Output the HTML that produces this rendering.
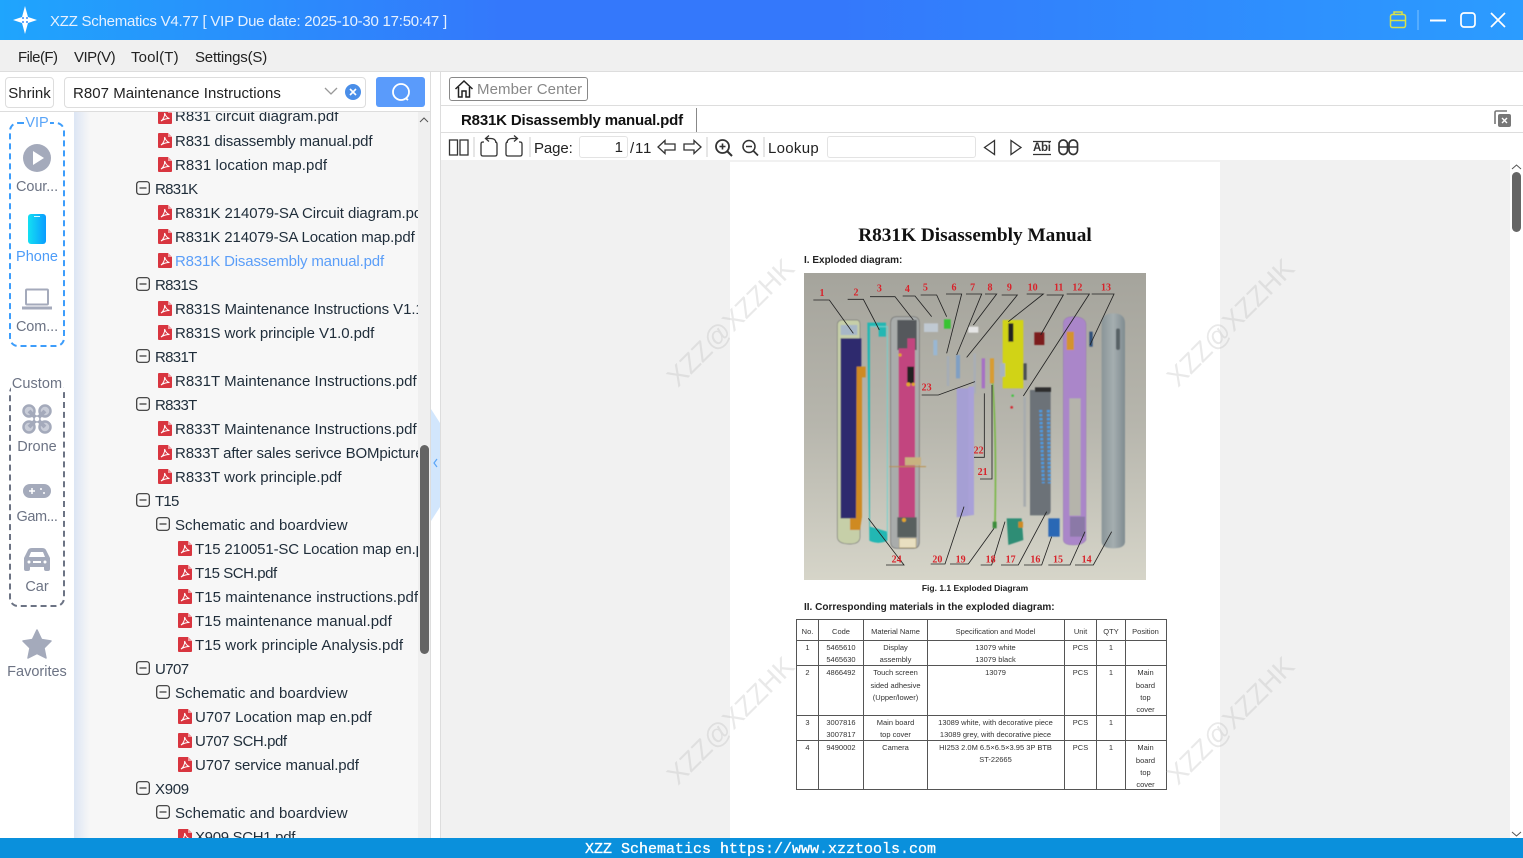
<!DOCTYPE html>
<html><head><meta charset="utf-8"><title>XZZ Schematics</title>
<style>
html,body{margin:0;padding:0;width:1523px;height:858px;overflow:hidden;background:#fff}
body{font-family:"Liberation Sans","Noto Sans CJK SC",sans-serif;position:relative;color:#222}
.a{position:absolute}
.t{position:absolute;white-space:nowrap;line-height:20px;font-size:15px;margin-top:1px}
#tree{position:absolute;left:74px;top:112px;width:344px;height:726px;overflow:hidden;background:linear-gradient(90deg,#dce5f4 0,#f7f7f7 16px,#f7f7f7 100%)}
#tree .r{position:absolute;white-space:nowrap;font-size:15px;line-height:20px;color:#1f2d3a;letter-spacing:-.09px;margin-top:1px}
#tree svg{position:absolute}
.side{position:absolute;left:0;width:74px;text-align:center;font-size:14.5px;line-height:18px;color:#6c7384;margin-top:1px}
</style></head><body>
<svg width="0" height="0" style="position:absolute"><defs>
<symbol id="pdf" viewBox="0 0 14 15"><path d="M0 1Q0 0 1 0H10L14 4V14Q14 15 13 15H1Q0 15 0 14Z" fill="#d8353f"/><path d="M10 0V4H14Z" fill="#f0a0a5"/><path d="M3 12C5 11 7 7 6.6 4C7.6 7 9 9 11.5 9.5C9 9.5 6 10 3 12Z" fill="none" stroke="#fff" stroke-width="1"/></symbol>
<symbol id="minus" viewBox="0 0 14 14"><rect x=".7" y=".7" width="12.6" height="12.6" rx="2.5" fill="none" stroke="#333" stroke-width="1.2"/><path d="M3.5 7H10.5" stroke="#333" stroke-width="1.2"/></symbol>
</defs></svg>

<!-- title bar -->
<div class="a" style="left:0;top:0;width:1523px;height:40px;background:linear-gradient(90deg,#1fa5fd 0,#3478fb 33%,#3478fb 55%,#2b9cff 100%)"></div>
<svg class="a" style="left:12px;top:5px" width="26" height="30" viewBox="0 0 26 30"><path d="M13 1L16 12L25 15L16 18L13 29L10 18L1 15L10 12Z" fill="#fff"/><circle cx="11" cy="13" r="1" fill="#3a8cfb"/><circle cx="15" cy="13" r="1" fill="#3a8cfb"/><circle cx="11" cy="17" r="1" fill="#3a8cfb"/><circle cx="15" cy="17" r="1" fill="#3a8cfb"/></svg>
<div class="t" style="left:50px;top:11px;color:#e6f1ff;font-size:15px;letter-spacing:-.24px">XZZ Schematics V4.77 [ VIP Due date: 2025-10-30 17:50:47 ]</div>
<svg class="a" style="left:1385px;top:8px" width="130" height="24" viewBox="0 0 130 24" fill="none">
<rect x="5.5" y="6.5" width="15" height="13" rx="2" stroke="#d7e24a" stroke-width="1.5"/><path d="M9 6V4H17V6M5.5 12.5H20.5M11 12.5H15" stroke="#d7e24a" stroke-width="1.5"/>
<path d="M33 2V22" stroke="#7cc2ff"/>
<path d="M45 12.5H61" stroke="#fff" stroke-width="2"/>
<rect x="76" y="5" width="14" height="14" rx="3" stroke="#fff" stroke-width="1.7"/>
<path d="M106 5L120 19M120 5L106 19" stroke="#fff" stroke-width="1.7"/>
</svg>

<!-- menu -->
<div class="a" style="left:0;top:40px;width:1523px;height:31px;background:#f0f0f0;border-bottom:1px solid #ddd"></div>
<div class="t" style="left:18px;top:47px;letter-spacing:-.55px">File(F)</div>
<div class="t" style="left:74px;top:47px;letter-spacing:-.5px">VIP(V)</div>
<div class="t" style="left:131px;top:47px;letter-spacing:.15px">Tool(T)</div>
<div class="t" style="left:195px;top:47px;letter-spacing:-.2px">Settings(S)</div>

<!-- left toolbar -->
<div class="a" style="left:0;top:72px;width:430px;height:39px;background:#fff;border-bottom:1px solid #ddd"></div>
<div class="a" style="left:5px;top:77px;width:47px;height:29px;border:1px solid #ddd;border-radius:4px;text-align:center;line-height:31px;font-size:15px">Shrink</div>
<div class="a" style="left:64px;top:77px;width:300px;height:29px;border:1px solid #ddd;border-radius:4px"></div>
<div class="t" style="left:73px;top:83px;font-size:15px;letter-spacing:.04px">R807 Maintenance Instructions</div>
<svg class="a" style="left:322px;top:82px" width="40" height="20" viewBox="0 0 40 20"><path d="M3 6L9 12L15 6" fill="none" stroke="#999" stroke-width="1.3"/><circle cx="31" cy="10" r="8" fill="#4a8ee8"/><path d="M28 7L34 13M34 7L28 13" stroke="#fff" stroke-width="1.6"/></svg>
<div class="a" style="left:376px;top:77px;width:49px;height:30px;background:#5a9bfb;border-radius:3px"></div>
<svg class="a" style="left:390px;top:81px" width="22" height="22" viewBox="0 0 22 22" fill="none"><circle cx="11" cy="11" r="8" stroke="#fff" stroke-width="1.8"/><path d="M15.5 17L18 19" stroke="#fff" stroke-width="1.8"/></svg>

<!-- left icon column -->
<div class="a" style="left:0;top:112px;width:74px;height:726px;background:#fff"></div>
<div class="a" style="left:9px;top:122px;width:52px;height:221px;border:2px dashed #3d9dfb;border-radius:9px"></div>
<div class="side" style="top:113px;left:24px;width:26px;background:#fff;color:#5aa5f8">VIP</div>
<svg class="a" style="left:22px;top:143px" width="30" height="30" viewBox="0 0 30 30"><circle cx="15" cy="15" r="14" fill="#a4aabb"/><path d="M11 8L22 15L11 22Z" fill="#fff"/></svg>
<div class="side" style="top:177px;letter-spacing:-.1px">Cour...</div>
<svg class="a" style="left:28px;top:214px" width="18" height="30" viewBox="0 0 18 30"><defs><linearGradient id="ph" x1="0" x2="1" y1="0" y2="0"><stop offset="0" stop-color="#13e0f2"/><stop offset="1" stop-color="#0a9cff"/></linearGradient></defs><rect width="18" height="30" rx="3" fill="url(#ph)"/><rect x="6" y="2" width="6" height="1" fill="#d8fbff"/></svg>
<div class="side" style="top:247px;color:#4d9cf8">Phone</div>
<svg class="a" style="left:22px;top:288px" width="30" height="22" viewBox="0 0 30 22" fill="none"><rect x="4" y="1.5" width="22" height="15" rx="1" stroke="#a4aabb" stroke-width="2"/><path d="M0 20H30" stroke="#a4aabb" stroke-width="3"/></svg>
<div class="side" style="top:317px;letter-spacing:-.1px">Com...</div>

<div class="a" style="left:9px;top:384px;width:52px;height:219px;border:2px dashed #6c7384;border-radius:9px"></div>
<div class="side" style="top:374px;left:11px;width:52px;background:#fff;letter-spacing:.05px">Custom</div>
<svg class="a" style="left:22px;top:404px" width="30" height="30" viewBox="0 0 30 30" fill="none"><circle cx="7" cy="7" r="5.5" fill="#c9cdd8" stroke="#a4aabb" stroke-width="2.5"/><circle cx="23" cy="7" r="5.5" fill="#c9cdd8" stroke="#a4aabb" stroke-width="2.5"/><circle cx="7" cy="23" r="5.5" fill="#c9cdd8" stroke="#a4aabb" stroke-width="2.5"/><circle cx="23" cy="23" r="5.5" fill="#c9cdd8" stroke="#a4aabb" stroke-width="2.5"/><path d="M7 7L23 23M23 7L7 23" stroke="#a4aabb" stroke-width="4"/><circle cx="15" cy="15" r="3" fill="#fff" stroke="#a4aabb" stroke-width="1.5"/></svg>
<div class="side" style="top:437px">Drone</div>
<svg class="a" style="left:23px;top:484px" width="28" height="14" viewBox="0 0 28 14"><rect width="28" height="14" rx="7" fill="#a4aabb"/><path d="M6 7H12M9 4V10" stroke="#fff" stroke-width="1.5"/><circle cx="18" cy="5" r="1" fill="#fff"/><circle cx="21" cy="9" r="1" fill="#fff"/></svg>
<div class="side" style="top:507px;letter-spacing:-.4px">Gam...</div>
<svg class="a" style="left:23px;top:547px" width="28" height="25" viewBox="0 0 28 25"><path d="M1 11L5 3Q6 1 9 1H19Q22 1 23 3L27 11V22Q27 24 25 24H23Q21 24 21 22V20H7V22Q7 24 5 24H3Q1 24 1 22Z" fill="#a4aabb"/><path d="M6 10L8 5H20L22 10Z" fill="#fff"/><circle cx="6" cy="15" r="1.5" fill="#fff"/><circle cx="22" cy="15" r="1.5" fill="#fff"/><rect x="10" y="14" width="8" height="2" fill="#fff"/></svg>
<div class="side" style="top:577px">Car</div>
<svg class="a" style="left:22px;top:629px" width="30" height="30" viewBox="0 0 30 30"><path d="M15 1L19.5 10.5L29 12L22 19L24 29L15 24.5L6 29L8 19L1 12L10.5 10.5Z" fill="#a4aabb" stroke="#a4aabb" stroke-linejoin="round" stroke-width="1.5"/></svg>
<div class="side" style="top:662px">Favorites</div>

<!-- tree -->
<div id="tree">
<svg style="left:84px;top:-3px" width="14" height="15"><use href="#pdf"/></svg><div class="r" style="left:101px;top:-6px;letter-spacing:.035px">R831 circuit diagram.pdf</div>
<svg style="left:84px;top:21px" width="14" height="15"><use href="#pdf"/></svg><div class="r" style="left:101px;top:19px;letter-spacing:-.13px">R831 disassembly manual.pdf</div>
<svg style="left:84px;top:45px" width="14" height="15"><use href="#pdf"/></svg><div class="r" style="left:101px;top:43px;letter-spacing:.1px">R831 location map.pdf</div>
<svg style="left:62px;top:69px" width="14" height="14"><use href="#minus"/></svg><div class="r" style="left:81px;top:67px;letter-spacing:-.69px">R831K</div>
<svg style="left:84px;top:93px" width="14" height="15"><use href="#pdf"/></svg><div class="r" style="left:101px;top:91px">R831K 214079-SA Circuit diagram.pdf</div>
<svg style="left:84px;top:117px" width="14" height="15"><use href="#pdf"/></svg><div class="r" style="left:101px;top:115px;letter-spacing:-.12px">R831K 214079-SA Location map.pdf</div>
<svg style="left:84px;top:141px" width="14" height="15"><use href="#pdf"/></svg><div class="r" style="left:101px;top:139px;color:#5b9ef8;letter-spacing:-.16px">R831K Disassembly manual.pdf</div>
<svg style="left:62px;top:165px" width="14" height="14"><use href="#minus"/></svg><div class="r" style="left:81px;top:163px;letter-spacing:-.69px">R831S</div>
<svg style="left:84px;top:189px" width="14" height="15"><use href="#pdf"/></svg><div class="r" style="left:101px;top:187px">R831S Maintenance Instructions V1.1.pdf</div>
<svg style="left:84px;top:213px" width="14" height="15"><use href="#pdf"/></svg><div class="r" style="left:101px;top:211px">R831S work principle V1.0.pdf</div>
<svg style="left:62px;top:237px" width="14" height="14"><use href="#minus"/></svg><div class="r" style="left:81px;top:235px;letter-spacing:-.69px">R831T</div>
<svg style="left:84px;top:261px" width="14" height="15"><use href="#pdf"/></svg><div class="r" style="left:101px;top:259px;letter-spacing:.03px">R831T Maintenance Instructions.pdf</div>
<svg style="left:62px;top:285px" width="14" height="14"><use href="#minus"/></svg><div class="r" style="left:81px;top:283px;letter-spacing:-.69px">R833T</div>
<svg style="left:84px;top:309px" width="14" height="15"><use href="#pdf"/></svg><div class="r" style="left:101px;top:307px;letter-spacing:.03px">R833T Maintenance Instructions.pdf</div>
<svg style="left:84px;top:333px" width="14" height="15"><use href="#pdf"/></svg><div class="r" style="left:101px;top:331px;letter-spacing:-.13px">R833T after sales serivce BOMpicture.pdf</div>
<svg style="left:84px;top:357px" width="14" height="15"><use href="#pdf"/></svg><div class="r" style="left:101px;top:355px;letter-spacing:.04px">R833T work principle.pdf</div>
<svg style="left:62px;top:381px" width="14" height="14"><use href="#minus"/></svg><div class="r" style="left:81px;top:379px;letter-spacing:-.75px">T15</div>
<svg style="left:82px;top:405px" width="14" height="14"><use href="#minus"/></svg><div class="r" style="left:101px;top:403px;letter-spacing:.04px">Schematic and boardview</div>
<svg style="left:104px;top:429px" width="14" height="15"><use href="#pdf"/></svg><div class="r" style="left:121px;top:427px;letter-spacing:-.15px">T15 210051-SC Location map en.pdf</div>
<svg style="left:104px;top:453px" width="14" height="15"><use href="#pdf"/></svg><div class="r" style="left:121px;top:451px;letter-spacing:-.45px">T15 SCH.pdf</div>
<svg style="left:104px;top:477px" width="14" height="15"><use href="#pdf"/></svg><div class="r" style="left:121px;top:475px;letter-spacing:.07px">T15 maintenance instructions.pdf</div>
<svg style="left:104px;top:501px" width="14" height="15"><use href="#pdf"/></svg><div class="r" style="left:121px;top:499px;letter-spacing:.1px">T15 maintenance manual.pdf</div>
<svg style="left:104px;top:525px" width="14" height="15"><use href="#pdf"/></svg><div class="r" style="left:121px;top:523px;letter-spacing:.07px">T15 work principle Analysis.pdf</div>
<svg style="left:62px;top:549px" width="14" height="14"><use href="#minus"/></svg><div class="r" style="left:81px;top:547px;letter-spacing:-.6px">U707</div>
<svg style="left:82px;top:573px" width="14" height="14"><use href="#minus"/></svg><div class="r" style="left:101px;top:571px;letter-spacing:.04px">Schematic and boardview</div>
<svg style="left:104px;top:597px" width="14" height="15"><use href="#pdf"/></svg><div class="r" style="left:121px;top:595px;letter-spacing:.03px">U707 Location map en.pdf</div>
<svg style="left:104px;top:621px" width="14" height="15"><use href="#pdf"/></svg><div class="r" style="left:121px;top:619px;letter-spacing:-.42px">U707 SCH.pdf</div>
<svg style="left:104px;top:645px" width="14" height="15"><use href="#pdf"/></svg><div class="r" style="left:121px;top:643px">U707 service manual.pdf</div>
<svg style="left:62px;top:669px" width="14" height="14"><use href="#minus"/></svg><div class="r" style="left:81px;top:667px;letter-spacing:-.3px">X909</div>
<svg style="left:82px;top:693px" width="14" height="14"><use href="#minus"/></svg><div class="r" style="left:101px;top:691px;letter-spacing:.04px">Schematic and boardview</div>
<svg style="left:104px;top:717px" width="14" height="15"><use href="#pdf"/></svg><div class="r" style="left:121px;top:715px;letter-spacing:-.32px">X909 SCH1.pdf</div>
</div>
<div class="a" style="left:418px;top:112px;width:12px;height:726px;background:#efefef"></div>
<svg class="a" style="left:418px;top:115px" width="12" height="10"><path d="M2 7L6 3L10 7" fill="none" stroke="#555"/></svg>
<div class="a" style="left:420px;top:445px;width:9px;height:209px;background:#646464;border-radius:5px"></div>
<div class="a" style="left:430px;top:72px;width:1px;height:766px;background:#ddd"></div>
<div class="a" style="left:440px;top:72px;width:1px;height:766px;background:#ddd"></div>
<svg class="a" style="left:431px;top:409px" width="9" height="112" viewBox="0 0 9 112"><path d="M0 0L9 14V98L0 112Z" fill="#d2e6fc"/><path d="M6 50L3 54L6 58" fill="none" stroke="#5aa5f8" stroke-width="1.2"/></svg>

<!-- right header -->
<div class="a" style="left:441px;top:105px;width:1082px;height:1px;background:#ddd"></div>
<div class="a" style="left:441px;top:132px;width:1082px;height:1px;background:#ddd"></div>
<div class="a" style="left:449px;top:77px;width:137px;height:22px;border:1px solid #888;border-radius:3px"></div>
<svg class="a" style="left:454px;top:79px" width="20" height="20" viewBox="0 0 20 20" fill="none" stroke="#222" stroke-width="1.5"><path d="M1.5 10L10 2L18.5 10"/><path d="M4.5 8V18H8V12H12V18H15.5V8"/></svg>
<div class="t" style="left:477px;top:79px;font-size:15px;color:#888;letter-spacing:.08px">Member Center</div>
<div class="t" style="left:461px;top:110px;font-size:15px;font-weight:bold;color:#111;letter-spacing:-.17px">R831K Disassembly manual.pdf</div>
<div class="a" style="left:696px;top:108px;width:1px;height:24px;background:#888"></div>
<svg class="a" style="left:1493px;top:109px" width="20" height="20" viewBox="0 0 20 20"><path d="M2 15V3.5Q2 2 3.5 2H14" fill="none" stroke="#777" stroke-width="1.6"/><rect x="5" y="5" width="13" height="13" rx="2" fill="#777"/><path d="M9 9L14 14M14 9L9 14" stroke="#fff" stroke-width="1.4"/></svg>

<!-- pdf toolbar -->
<svg class="a" style="left:441px;top:133px" width="660" height="27" viewBox="0 0 660 27" fill="none" stroke="#333" stroke-width="1.3">
<rect x="8.5" y="7" width="8" height="15"/><rect x="19" y="7" width="8" height="15"/>
<path d="M33 4V24M89 4V24M266 4V24M323 4V24" stroke="#ccc" stroke-width="1"/>
<path d="M43 9H42Q40 9 40 11V21Q40 23 42 23H54Q56 23 56 21V11Q56 9 54 9"/><path d="M48 2.5L44.5 5.5L48 8.5M45 5.5H50Q54 5.5 55 9"/>
<path d="M78 9H79Q81 9 81 11V21Q81 23 79 23H67Q65 23 65 21V11Q65 9 67 9"/><path d="M73 2.5L76.5 5.5L73 8.5M76 5.5H71Q67 5.5 66 9"/>
<path d="M217 14L224 7.5V11H234V17H224V20.5Z"/>
<path d="M260 14L253 7.5V11H243V17H253V20.5Z"/>
<circle cx="281.5" cy="13.5" r="6.5" stroke-width="1.8"/><path d="M286.5 18.5L291 23" stroke-width="2"/><path d="M278.5 13.5H284.5M281.5 10.5V16.5" stroke-width="1.6"/>
<circle cx="308" cy="13.5" r="6" stroke-width="1.5"/><path d="M312.5 18L317 22.5" stroke-width="1.8"/><path d="M305 13.5H311" stroke-width="1.5"/>
<path d="M553.5 7.5L543.5 14.5L553.5 21.5Z"/>
<path d="M570 7.5L580 14.5L570 21.5Z"/>
<path d="M592 8.5H610M592 21.5H610" stroke-width="1.2"/>
<rect x="618" y="7" width="8.5" height="14.5" rx="4.2" stroke-width="1.7"/><rect x="628" y="7" width="8.5" height="14.5" rx="4.2" stroke-width="1.7"/><path d="M618 14H636.5" stroke-width="1.5"/>
</svg>
<div class="a" style="left:1033px;top:142px;font-size:11.5px;font-weight:bold;line-height:12px;color:#333;letter-spacing:-.3px;white-space:nowrap">Abi</div>
<div class="t" style="left:534px;top:138px;font-size:15px;letter-spacing:-.1px">Page:</div>
<div class="a" style="left:579px;top:136px;width:47px;height:20px;border:1px solid #e3e3e3;border-radius:3px;text-align:right;font-size:15px;line-height:22px"><span style="padding-right:4px">1</span></div>
<div class="t" style="left:630px;top:138px;font-size:15px;letter-spacing:.8px">/11</div>
<div class="t" style="left:768px;top:138px;font-size:15px;letter-spacing:.3px">Lookup</div>
<div class="a" style="left:827px;top:136px;width:147px;height:20px;border:1px solid #e3e3e3;border-radius:3px"></div>

<!-- viewer -->
<div class="a" style="left:441px;top:160px;width:1069px;height:678px;background:#f1f1f1"></div>
<div class="a" style="left:730px;top:162px;width:490px;height:676px;background:#fff"></div>
<svg class="a" style="left:1510px;top:162px" width="13" height="10"><path d="M2 7L6.5 3L11 7" fill="none" stroke="#555"/></svg>
<div class="a" style="left:1512px;top:172px;width:9px;height:60px;background:#666;border-radius:5px"></div>
<svg class="a" style="left:1510px;top:830px" width="13" height="8"><path d="M2 2L6.5 6L11 2" fill="none" stroke="#555"/></svg>

<div class="a" style="left:730px;top:224px;width:490px;text-align:center;font:bold 19.3px/24px 'Liberation Serif',serif;color:#111">R831K Disassembly Manual</div>
<div class="t" style="left:804px;top:250px;font-size:10px;font-weight:bold;color:#222">I. Exploded diagram:</div>

<!-- exploded diagram -->
<svg class="a" style="left:800px;top:270px" width="350" height="315" viewBox="0 0 1050 945">
<defs><linearGradient id="bg" x1="0" x2="0" y1="0" y2="1"><stop offset="0" stop-color="#a5a49c"/><stop offset=".5" stop-color="#b7b6ad"/><stop offset="1" stop-color="#d6d5c9"/></linearGradient>
<linearGradient id="bk" x1="0" x2="1" y1="0" y2="0"><stop offset="0" stop-color="#8a9598"/><stop offset=".5" stop-color="#a5aeb0"/><stop offset="1" stop-color="#7f8b90"/></linearGradient>
<filter id="b"><feGaussianBlur stdDeviation="1.3"/></filter></defs>
<rect x="12" y="9" width="1026" height="921" fill="url(#bg)"/>
<g filter="url(#b)">
<path d="M112 165Q112 150 130 150H170Q180 150 180 165V800Q180 822 150 822Q112 822 112 800Z" fill="#c6cfa8" stroke="#777" stroke-width="2"/>
<rect x="122" y="205" width="62" height="540" fill="#2d2b6e"/>
<path d="M170 290H197V322H186V740L180 780H150V745H168Z" fill="#cf8a22"/>
<rect x="122" y="165" width="50" height="30" fill="#a7b7c7"/>
<path d="M202 158H258V200H236V168H210V770L262 785V812Q235 825 208 812Z" fill="#22b7b3"/>
<path d="M212 170H262V790" fill="none" stroke="#74d1cd" stroke-width="3"/>
<path d="M272 160Q272 140 290 140H340Q358 140 358 160V815Q358 835 340 835H290Q272 835 272 815Z" fill="#a9acab" stroke="#666" stroke-width="2"/>
<rect x="292" y="150" width="58" height="90" fill="#55595c"/>
<path d="M296 235H322V205H345V780H296Z" fill="#c2457f"/>
<rect x="322" y="290" width="20" height="50" fill="#232323"/>
<rect x="292" y="742" width="58" height="60" fill="#59605f"/>
<rect x="298" y="805" width="50" height="28" fill="#e8dfc0" stroke="#a78a3c"/>
<rect x="315" y="562" width="48" height="24" fill="#c8b280"/>
<path d="M268 590H378" stroke="#b98f49" stroke-width="3"/>
<circle cx="325" cy="343" r="6" fill="#e3a52a"/><circle cx="340" cy="343" r="5" fill="#e3a52a"/><circle cx="312" cy="750" r="6" fill="#e3a52a"/><circle cx="300" cy="255" r="5" fill="#e3a52a"/>
<rect x="372" y="160" width="42" height="26" fill="#c0c9d2"/><rect x="400" y="210" width="12" height="46" fill="#99b7d3"/>
<rect x="432" y="148" width="20" height="28" fill="#38c431"/>
<rect x="440" y="258" width="8" height="90" fill="#a6adb5"/>
<rect x="468" y="255" width="12" height="70" fill="#7f9fc4"/>
<rect x="520" y="250" width="8" height="120" fill="#a9aeb5"/>
<rect x="505" y="170" width="30" height="18" fill="#e5e5e5"/>
<path d="M470 355H520V735L470 742Z" fill="#a59fd4"/>
<path d="M505 350H522V735H505Z" fill="#a9a1d8"/>
<rect x="545" y="265" width="10" height="90" fill="#a66fc4"/>
<rect x="570" y="265" width="12" height="75" fill="#d89c32"/>
<path d="M578 340Q590 500 585 760" fill="none" stroke="#7bb74a" stroke-width="5"/>
<rect x="578" y="755" width="12" height="20" fill="#3a8c3a"/>
<rect x="608" y="150" width="62" height="205" fill="#d1d318"/>
<rect x="625" y="160" width="15" height="55" fill="#222"/>
<rect x="600" y="280" width="15" height="40" fill="#a7b2bf"/>
<rect x="670" y="280" width="10" height="50" fill="#4b4f52"/>
<rect x="703" y="187" width="30" height="38" fill="#7c1a1c"/>
<circle cx="635" cy="412" r="4" fill="#d4252f"/><circle cx="638" cy="377" r="4" fill="#44c444"/>
<rect x="670" y="380" width="8" height="330" fill="#a8acae"/>
<path d="M690 360H752V722Q752 736 735 736H690Z" fill="#6c7278"/>
<rect x="705" y="352" width="48" height="14" fill="#2f2f2f"/>
<path d="M722 420L730 640M745 420L748 640" stroke="#4d9be0" stroke-width="9" stroke-dasharray="7 5"/>
<path d="M790 160Q790 140 820 140Q858 140 858 165V810Q850 825 820 825Q790 825 790 810Z" fill="#aa86c9" stroke="#8569a3"/>
<rect x="808" y="385" width="34" height="352" fill="#b5b4ab"/>
<rect x="800" y="185" width="22" height="55" fill="#d4932f"/>
<rect x="810" y="740" width="45" height="60" fill="#8b79a7"/>
<rect x="868" y="185" width="10" height="45" fill="#2f4f7a"/>
<path d="M905 160Q905 130 940 130Q975 130 975 160V815Q975 835 940 835Q905 835 905 815Z" fill="url(#bk)"/>
<rect x="948" y="175" width="12" height="65" rx="6" fill="#596266"/>
<path d="M620 745H665L670 810L625 825Z" fill="#2f8d74"/><rect x="655" y="755" width="14" height="18" fill="#cf8a22"/>
<rect x="745" y="745" width="34" height="55" fill="#2c67b5"/>
</g>
<g stroke="#222" stroke-width="2.5" fill="none">
<path d="M40 90H88L160 190M143 88H190L238 180M210 80H285L340 150M308 78H345L395 140M362 75H410L440 140M438 72H485L440 250M498 72H545L470 255M555 72H590L520 165M605 75H652L500 262M680 72H730L625 155M740 75H790L722 195M800 72H868L670 378M875 72H942L870 225M365 375H415L525 335M522 562H553V370M540 627H576V345M258 885H312L205 745M392 882H435L492 710M450 882H505L582 775M542 885H575L615 755M603 885H655L740 725M672 885H725L755 800M745 885H810L855 785M825 885H880L935 785"/></g>
<g fill="#d8222a" font-family="Liberation Serif,serif" font-weight="bold" font-size="30" text-anchor="middle">
<text x="66" y="78">1</text><text x="168" y="76">2</text><text x="238" y="64">3</text><text x="322" y="66">4</text><text x="376" y="62">5</text><text x="462" y="62">6</text><text x="518" y="62">7</text><text x="570" y="62">8</text><text x="628" y="62">9</text><text x="698" y="62">10</text><text x="776" y="62">11</text><text x="832" y="62">12</text><text x="918" y="62">13</text><text x="380" y="362">23</text><text x="536" y="550">22</text><text x="548" y="615">21</text><text x="412" y="878">20</text><text x="482" y="878">19</text><text x="572" y="878">18</text><text x="632" y="878">17</text><text x="706" y="878">16</text><text x="774" y="878">15</text><text x="860" y="878">14</text><text x="290" y="878">24</text>
</g>
</svg>
<div class="a" style="left:730px;top:582px;width:490px;text-align:center;font:bold 8.5px/12px 'Liberation Sans',sans-serif;color:#222">Fig. 1.1 Exploded Diagram</div>
<div class="t" style="left:804px;top:597px;font-size:10px;font-weight:bold;color:#222">II. Corresponding materials in the exploded diagram:</div>

<!-- table -->
<svg class="a" style="left:790px;top:610px" width="385" height="190" viewBox="790 610 385 190" font-family="Liberation Sans,sans-serif" font-size="7.5" fill="#333" text-anchor="middle">
<g stroke="#555" stroke-width="1" fill="none"><rect x="796.5" y="619.5" width="370" height="170"/>
<path d="M818.5 619V790M863.5 619V790M927.5 619V790M1064.5 619V790M1096.5 619V790M1125.5 619V790M796 640.5H1167M796 665.5H1167M796 715.5H1167M796 740.5H1167"/></g>
<text x="807.5" y="634">No.</text><text x="841" y="634">Code</text><text x="895.5" y="634">Material Name</text><text x="995.5" y="634">Specification and Model</text><text x="1080.5" y="634">Unit</text><text x="1111" y="634">QTY</text><text x="1145.5" y="634">Position</text>
<text x="807.5" y="650">1</text><text x="841" y="650">5465610</text><text x="841" y="662">5465630</text><text x="895.5" y="650">Display</text><text x="895.5" y="662">assembly</text><text x="995.5" y="650">13079 white</text><text x="995.5" y="662">13079 black</text><text x="1080.5" y="650">PCS</text><text x="1111" y="650">1</text>
<text x="807.5" y="675">2</text><text x="841" y="675">4866492</text><text x="895.5" y="675">Touch screen</text><text x="895.5" y="688">sided adhesive</text><text x="895.5" y="700">(Upper/lower)</text><text x="995.5" y="675">13079</text><text x="1080.5" y="675">PCS</text><text x="1111" y="675">1</text><text x="1145.5" y="675">Main</text><text x="1145.5" y="688">board</text><text x="1145.5" y="700">top</text><text x="1145.5" y="712">cover</text>
<text x="807.5" y="725">3</text><text x="841" y="725">3007816</text><text x="841" y="737">3007817</text><text x="895.5" y="725">Main board</text><text x="895.5" y="737">top cover</text><text x="995.5" y="725">13089 white, with decorative piece</text><text x="995.5" y="737">13089 grey, with decorative piece</text><text x="1080.5" y="725">PCS</text><text x="1111" y="725">1</text>
<text x="807.5" y="750">4</text><text x="841" y="750">9490002</text><text x="895.5" y="750">Camera</text><text x="995.5" y="750">HI253 2.0M 6.5×6.5×3.95 3P BTB</text><text x="995.5" y="762">ST-22665</text><text x="1080.5" y="750">PCS</text><text x="1111" y="750">1</text><text x="1145.5" y="750">Main</text><text x="1145.5" y="763">board</text><text x="1145.5" y="775">top</text><text x="1145.5" y="787">cover</text>
</svg>

<!-- watermarks -->
<svg class="a" style="left:441px;top:160px;pointer-events:none" width="1069" height="678" viewBox="441 160 1069 678" font-family="Liberation Sans,sans-serif" font-size="27" fill="#b5b5b5" fill-opacity=".3" text-anchor="middle">
<text transform="translate(737 329) rotate(-45)">XZZ@XZZHK</text>
<text transform="translate(1237 329) rotate(-45)">XZZ@XZZHK</text>
<text transform="translate(737 727) rotate(-45)">XZZ@XZZHK</text>
<text transform="translate(1237 727) rotate(-45)">XZZ@XZZHK</text>
</svg>

<!-- status bar -->
<div class="a" style="left:0;top:838px;width:1523px;height:20px;background:#0a90dc"></div>
<div class="a" style="left:585px;top:840px;white-space:nowrap;font:15px/19px 'Liberation Mono',monospace;color:#fff;-webkit-text-stroke:.3px #fff">XZZ Schematics https://www.xzztools.com</div>
</body></html>
